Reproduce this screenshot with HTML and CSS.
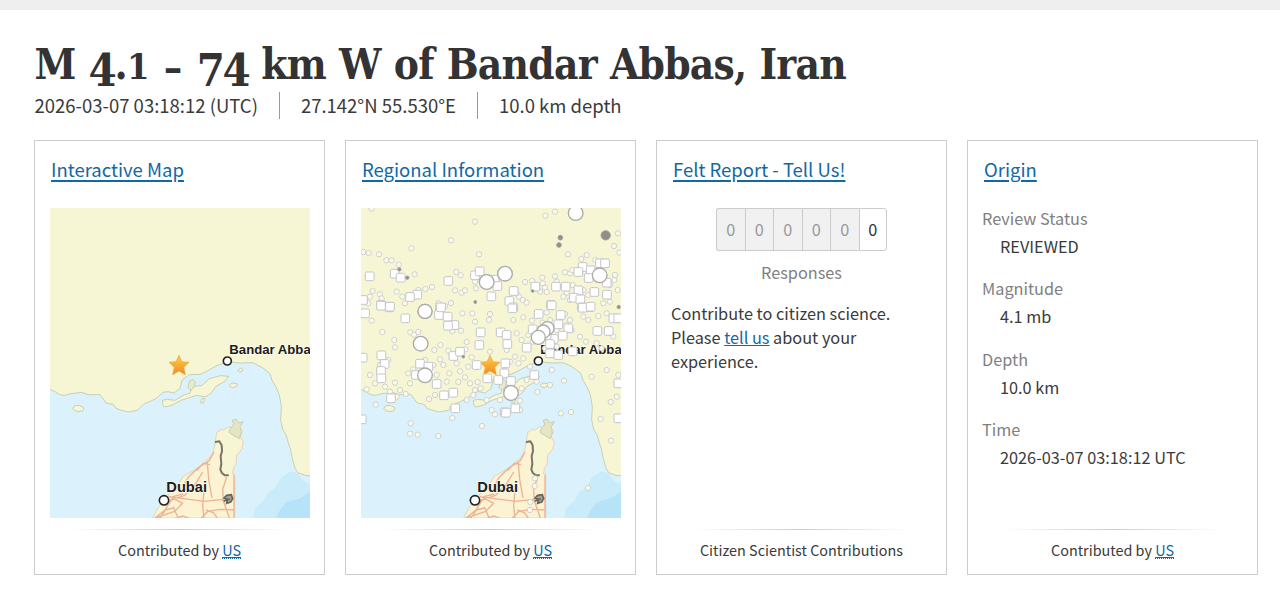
FILE: index.html
```
<!DOCTYPE html>
<html lang="en">
<head>
    <meta charset="UTF-8">
    <meta name="viewport" content="width=device-width, initial-scale=1.0">
    <title>M 4.1 - 74 km W of Bandar Abbas, Iran</title>
    <link rel="stylesheet" href="styles.css">
</head>
<body>
    <!-- shared map drawing -->
    <svg class="defs" width="0" height="0">
        <defs>
            <linearGradient id="starFill" x1="0" y1="0" x2="0" y2="1">
                <stop offset="0" stop-color="#fbd04a"/>
                <stop offset="1" stop-color="#f58a1c"/>
            </linearGradient>
            <symbol id="basemap" viewBox="30 -426 780 930">
                <rect x="30" y="-426" width="780" height="930" fill="#dbf2fc"/>
                <path fill="#c9ebfa" d="M640 504l5-30 25-20 15-28 20-12 18-32 30-18 20 6 15 22 22 10v102z"/>
                <path fill="#b7e3f8" d="M708 504l12-25 18-22 42-12 30-20v79z"/>
                <g fill="#f6f6d5" stroke="#c9cfb4" stroke-width="3" stroke-linejoin="round">
                    <path d="M24-432V116l21 9 14 9 14 2 20-5 32-4 20 7 35 0 8 10 10 15 22 4 8 12 14 5 22 6 28-5 18-18 38-17 22-19 14-2 18 4 18-13 6-26 22-16 32-1 18-8 30-17 34-13 38 4 38-1 30 15 22 18 6 20 12 20 10 24 6 35-2 40 6 28 10 16 8 28 5 14 6 30 8 28 8 14 22 8 24 2V-432z"/>
                    <path d="M367 151l15-3 22 3 30-17 16-4 6-20 30-4 22-20 34-9 24 2-13 16-25 14-14 20-18 12-26-5-22 7-25 8-30 16-20 4-4-5z"/>
                    <path d="M98 176l6-9 14-1 13 7-2 9-12 3-12-3zM594 60l8-6 7 5-5 7-9-1zM568 106l8-7 14 2 2 6-11 6-10-2zM481 158l5-12 8 0-4 13z"/>
                    <path fill="#e9eac6" d="M444 112l4-18 10-6 8 8-3 13-10 12z"/>
                </g>
                <path fill="#fbf3d2" stroke="#d5c9a0" stroke-width="2" d="M338 504l18-34 20-20 24-36 18-16 12-20 34-18 20-16 22-18 12-16 6-22 6-40 14-10 8 2 14-10 10 4 20-4 12 12-8 18 10 16-4 20-16 20-2 26-8 14-2 16h6v132z"/>
                <path fill="#f6f6d5" d="M546 278l6-34 18-4 24 20-2 40-16 22-6 44-20 4-14-20z"/>
                <path fill="#e4e5c2" stroke="#ccceb0" stroke-width="3" stroke-linejoin="round" d="M568 240l14-18-6-10 12-5 8 12 14-4-10 15 4 18-6 18-18-10-12-8z"/>
                <path fill="none" stroke="#efb196" stroke-width="4" stroke-linejoin="round" d="M522 306l-14 26-34 22-28 26-12 20M502 338l4 50 10 56M488 366l-24 40-30 30-40 14-34 54M386 440l106 14 88-9M390 440l38 20-24 24-58 20M400 470l14 34M370 490l28-50 32-8M492 504l-4-36 6-76M484 504l20-20 36-6 42 2M498 480l22 8 12 16M582 376v128M560 382l-12 36 2 34 18 52M345 504l30-24 26-6M510 344l-20-4-20 22M410 504l20-6 16 6"/>
                <path fill="none" stroke="#77766b" stroke-width="6" stroke-linejoin="round" stroke-linecap="round" d="M527 276l11-2 7 12 1 18-4 14 2 24-3 16 4 10 9 8 10 0"/>
                <path fill="#a5a38f" stroke="#65645d" stroke-width="5" d="M552 444l8-8 14-2 4 12-6 10-12 4 2-12zM551 454l18-8"/>
                <g fill="#fff" stroke="#222" stroke-width="5">
                    <circle cx="562" cy="33" r="12"/>
                    <circle cx="372" cy="451" r="14"/>
                </g>
                <g class="city">
                    <text x="568" y="11" font-size="39.5">Bandar Abbas</text>
                    <text x="379" y="427" font-size="44">Dubai</text>
                </g>
                <path fill="url(#starFill)" stroke="#e9a23c" stroke-width="2" stroke-linejoin="round" d="M417 16l9 19 21 2-16 15 5 22-19-11-19 11 5-22-16-15 21-2z"/>
            </symbol>
        </defs>
    </svg>

    <div class="topbar"></div>

    <header class="event-header">
        <h1>M <span class="low">4</span>.<span class="small">1</span> <span class="dash">-</span> <span class="low">74</span> km W of Bandar Abbas, Iran</h1>
        <ul class="event-details">
            <li>2026-03-07 03:18:12 (UTC)</li>
            <li>27.142°N 55.530°E</li>
            <li>10.0 km depth</li>
        </ul>
    </header>

    <main class="cards">
        <section class="card">
            <h2><a href="#">Interactive Map</a></h2>
            <svg class="map" viewBox="0 0 780 930"><use href="#basemap" width="780" height="930"/></svg>
            <footer>Contributed by <a href="#"><abbr>US</abbr></a></footer>
        </section>

        <section class="card">
            <h2><a href="#">Regional Information</a></h2>
            <svg class="map" viewBox="0 0 780 930">
                <use href="#basemap" width="780" height="930"/>
                <g id="quakes"></g>
            </svg>
            <footer>Contributed by <a href="#"><abbr>US</abbr></a></footer>
        </section>

        <section class="card">
            <h2><a href="#">Felt Report - Tell Us!</a></h2>
            <div class="felt">
                <ol class="responses">
                    <li>0</li>
                    <li>0</li>
                    <li>0</li>
                    <li>0</li>
                    <li>0</li>
                    <li class="last">0</li>
                </ol>
                <div class="responses-label">Responses</div>
                <p>Contribute to citizen science. Please <a href="#">tell us</a> about your experience.</p>
            </div>
            <footer>Citizen Scientist Contributions</footer>
        </section>

        <section class="card">
            <h2><a href="#">Origin</a></h2>
            <dl>
                <dt>Review Status</dt>
                <dd>REVIEWED</dd>
                <dt>Magnitude</dt>
                <dd>4.1 mb</dd>
                <dt>Depth</dt>
                <dd>10.0 km</dd>
                <dt>Time</dt>
                <dd>2026-03-07 03:18:12 UTC</dd>
            </dl>
            <footer>Contributed by <a href="#"><abbr>US</abbr></a></footer>
        </section>
    </main>

    <script src="quakes.js"></script>
</body>
</html>
```
FILE: styles.css
```
body {
    margin: 0;
    background-color: #fff;
    color: #3a3a3a;
    font-family: "Noto Sans CJK SC", "Open Sans", sans-serif;
    font-size: 16.3px;
    line-height: 24px;
}
.defs {
    position: absolute;
}
.topbar {
    height: 10px;
    background-color: #efefef;
}
.event-header {
    padding: 32px 34px 0 34.5px;
}
h1 {
    margin: 0;
    height: 50px;
    color: #333;
    font-family: "DejaVu Serif Condensed", "DejaVu Serif", serif;
    font-stretch: condensed;
    font-size: 42px;
    line-height: 45px;
    font-weight: bold;
    letter-spacing: -0.75px;
    word-spacing: 0.6px;
    white-space: nowrap;
}
h1 .low {
    vertical-align: -7px;
    font-size: 45px;
    line-height: 1px;
    letter-spacing: -2.3px;
}
h1 .small {
    font-size: 36px;
    line-height: 1px;
}
h1 .dash {
    display: inline-block;
    margin: 0 4px 0 3px;
    transform: translateY(3px) scale(1.25, 0.85);
}
.event-details {
    display: flex;
    margin: 0;
    padding: 0;
    list-style: none;
    font-size: 18.5px;
    line-height: 27px;
}
.event-details li + li {
    margin-left: 21px;
    padding-left: 21px;
    border-left: 1px solid #999;
}
a {
    color: #1268a4;
    text-decoration: underline;
}
.cards {
    display: grid;
    grid-template-columns: repeat(4, 291px);
    gap: 20px;
    padding: 21px 0 0 34px;
}
.card {
    display: flex;
    flex-direction: column;
    box-sizing: border-box;
    height: 435px;
    padding: 0 14px;
    border: 1px solid #ccc;
}
h2 {
    margin: 16px 2px 26px;
    font-size: 18.5px;
    line-height: 25px;
    font-weight: normal;
}
h2 a {
    text-decoration-thickness: 2px;
    text-underline-offset: 3px;
}
.map {
    display: block;
    flex: none;
    width: 260px;
    height: 310px;
    margin-left: 1px;
}
.city text {
    font-family: "Liberation Sans", Arial, sans-serif;
    font-weight: bold;
    fill: #1c1c1c;
    stroke: #fffdf0;
    stroke-width: 4px;
    paint-order: stroke;
}
.quake {
    fill: #fff;
    stroke: #c4c4cc;
    stroke-width: 3px;
}
.quake.tiny {
    fill: #fafae9;
    stroke: #c9c9cc;
    stroke-width: 2.5px;
}
.quake.big {
    stroke: #aaa;
    stroke-width: 4px;
}
.quake.dark {
    fill: #8f8f88;
    stroke: #a3a39c;
}
footer {
    margin-top: auto;
    padding: 9px 0 12px;
    background: linear-gradient(to right, transparent 8%, #ccc 50%, transparent 92%) top / 100% 1px no-repeat;
    font-size: 14.4px;
    text-align: center;
}
footer abbr {
    display: inline-block;
    height: 16px;
    line-height: 16px;
    vertical-align: baseline;
    border-bottom: 1px dotted #1268a4;
    text-decoration: underline;
}
.responses {
    display: flex;
    justify-content: center;
    margin: 0;
    padding: 0;
    list-style: none;
}
.responses li {
    box-sizing: border-box;
    width: 28.5px;
    height: 43px;
    border: 1px solid #ccc;
    border-right: 0;
    background-color: #f1f1f1;
    color: #999;
    line-height: 40px;
    text-align: center;
}
.responses li:first-child {
    border-radius: 3px 0 0 3px;
}
.responses .last {
    border-right: 1px solid #ccc;
    border-radius: 0 3px 3px 0;
    background-color: #fff;
    color: #333;
}
.responses-label {
    padding-top: 9px;
    color: #808080;
    text-align: center;
}
.felt p {
    margin: 17px 0 0;
}
dl {
    margin: -2px 0 0;
}
dt {
    color: #808080;
}
dd {
    margin: 4px 0 18.3px 18px;
}
```
FILE: quakes.js
```
// past earthquakes around the epicentre, grouped in three bands of the map
const bands = [
    {
        dx: -33, dy: -24,
        tiny: [[65,26],[375,65],[303,121],[184,145],[387,163],[586,47],[615,35],[804,100],[792,138],[40,156],[56,159],[87,163],[109,181],[125,181],[146,194],[194,223],[654,163],[710,165],[694,177],[736,180],[808,158],[319,216],[332,226],[226,267],[246,261],[315,271],[335,278],[345,271],[303,309],[525,246],[547,243],[577,233],[615,229],[660,220],[667,210],[645,217],[578,250],[585,263],[590,276],[570,275],[795,225],[793,240],[803,270],[780,255],[700,270],[715,285],[650,278],[660,300],[60,290],[90,283],[68,273],[140,275],[157,290],[165,310],[95,295],[507,290],[518,300],[530,308],[500,280],[375,245],[378,265],[445,235],[720,215],[668,255],[640,290],[620,245],[780,305],[760,310],[55,310],[205,270],[265,310],[285,318]],
        squares: [[59,229],[134,221],[152,233],[202,284],[180,291],[93,315],[118,322],[39,300],[375,226],[389,214],[434,239],[442,258],[424,289],[295,243],[491,273],[556,260],[618,260],[647,260],[698,201],[685,216],[750,190],[765,190],[722,211],[716,234],[770,248],[733,276],[771,284],[685,271],[672,293],[691,298],[478,303],[490,322],[603,315],[720,321],[696,322],[270,325]],
        big: [[677,39,22],[465,221,22],[410,246,22],[749,226,22],[225,334,21]],
        dark: [[767,106,14],[631,113,7],[627,135,7],[172,233,5],[148,208,5],[548,273,4],[376,306,4],[806,321,5]]
    },
    {
        dx: -33, dy: 276,
        tiny: [[337,40],[367,40],[375,65],[333,92],[307,93],[420,42],[417,60],[97,96],[65,62],[181,97],[192,104],[205,96],[133,120],[135,142],[253,150],[271,135],[295,152],[350,126],[347,148],[420,155],[365,172],[355,200],[320,190],[330,214],[298,220],[290,245],[260,225],[237,297],[255,285],[325,246],[345,232],[360,250],[383,246],[375,270],[392,265],[60,225],[75,250],[50,268],[105,260],[120,275],[150,270],[135,248],[140,290],[167,282],[180,250],[175,220],[190,208],[490,60],[520,52],[546,62],[500,100],[515,120],[548,125],[535,105],[645,42],[660,60],[650,75],[665,90],[600,60],[578,68],[620,90],[590,38],[700,50],[715,60],[745,48],[770,40],[708,125],[740,130],[755,145],[690,110],[790,110],[495,170],[520,175],[480,185],[505,190],[540,200],[530,240],[515,265],[560,245],[605,210],[562,276],[600,255],[642,242],[470,150],[463,212],[620,140],[585,145],[770,210],[725,230],[805,225],[782,306],[800,290],[633,340],[663,336],[450,300],[510,302],[77,314],[307,324],[350,300],[370,285],[410,300],[425,330],[510,330],[90,195],[115,180],[225,180],[250,195],[270,178],[280,195]],
        squares: [[45,40],[93,17],[120,20],[166,55],[267,45],[293,50],[273,22],[313,75],[294,77],[392,97],[388,135],[94,166],[104,192],[93,213],[94,235],[38,173],[210,191],[235,200],[260,252],[198,225],[310,168],[330,155],[452,97],[470,105],[472,132],[487,25],[380,195],[466,190],[463,220],[412,235],[445,240],[483,243],[553,225],[282,286],[310,278],[123,295],[316,325],[464,337],[496,325],[566,42],[605,16],[632,45],[625,73],[655,85],[638,107],[611,117],[530,143],[600,160],[625,165],[742,93],[776,93],[790,55],[805,55],[698,23],[722,20],[668,154],[805,250],[548,88],[600,132],[590,105]],
        big: [[225,34,21],[212,131,22],[225,226,22],[592,85,20],[580,95,20],[565,112,21],[483,279,22]],
        dark: [[340,170,4],[376,6,4]]
    },
    {
        dx: -33, dy: 606,
        tiny: [[182,40],[180,71],[203,74],[265,78],[396,48],[307,24],[435,13],[752,27],[783,92],[714,234],[554,228],[541,276],[540,300],[555,205]],
        squares: [[35,28],[468,8],[805,25]],
        big: [],
        dark: []
    }
];

const layer = document.getElementById('quakes');

function add(tag, attrs) {
    const el = document.createElementNS('http://www.w3.org/2000/svg', tag);
    for (const name in attrs) {
        el.setAttribute(name, attrs[name]);
    }
    layer.appendChild(el);
}

bands.forEach(({ dx, dy, tiny, squares, big, dark }) => {
    tiny.forEach(([x, y]) => add('circle', { class: 'quake tiny', cx: x + dx, cy: y + dy, r: 8 }));
    squares.forEach(([x, y]) => add('rect', { class: 'quake', x: x + dx - 13, y: y + dy - 13, width: 26, height: 26, rx: 4 }));
    dark.forEach(([x, y, r]) => add('circle', { class: 'quake dark', cx: x + dx, cy: y + dy, r: r }));
    big.forEach(([x, y, r]) => add('circle', { class: 'quake big', cx: x + dx, cy: y + dy, r: r }));
});
```
